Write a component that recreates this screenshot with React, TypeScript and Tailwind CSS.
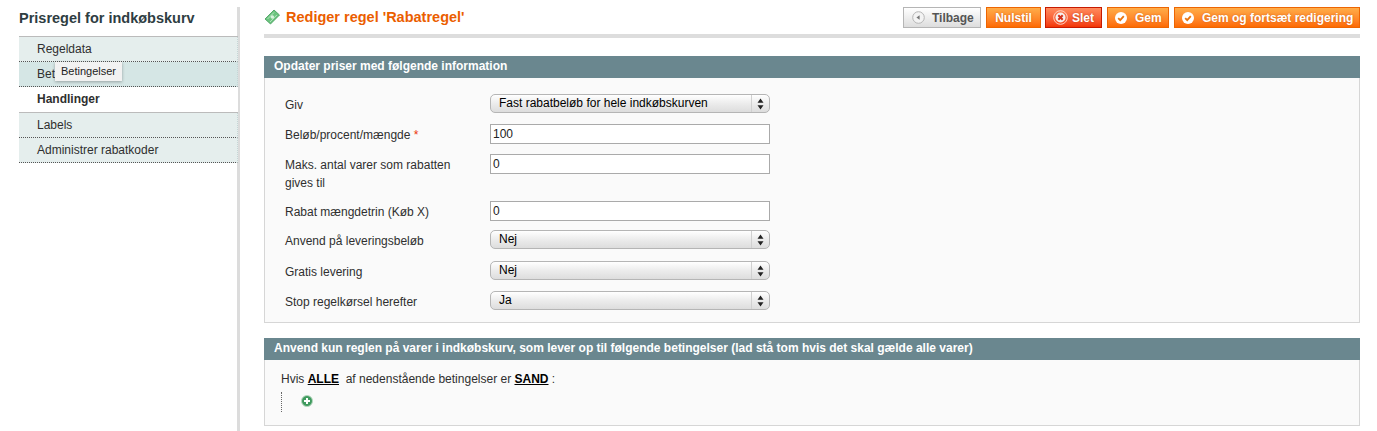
import React from "react";

function CheckIcon() {
  return (
    <svg width="14" height="14" viewBox="0 0 14 14" className="shrink-0">
      <circle cx="7" cy="7" r="6" fill="#fff" />
      <path d="M4.2 7.2 6.2 9.2 9.8 5.2" fill="none" stroke="#e8740f" strokeWidth="1.8" />
    </svg>
  );
}

function Orange({ children, className = "" }: { children: React.ReactNode; className?: string }) {
  return (
    <div
      className={`h-[21px] flex items-center border border-[#ed6502] bg-linear-to-b from-[#ffac47] to-[#fd6a00] text-white font-bold text-[12px] leading-none [text-shadow:0_0_2px_rgba(180,70,0,0.6)] ${className}`}
    >
      {children}
    </div>
  );
}

function Field({ label, req, children, tall }: { label: React.ReactNode; req?: boolean; children: React.ReactNode; tall?: boolean }) {
  return (
    <div className="flex items-start">
      <div className={`w-[205px] shrink-0 text-[12px] leading-[18px] text-[#2f2f2f] ${tall ? "pr-[20px]" : ""} pt-[2px]`}>
        {label}
        {req && <span className="text-[#eb340a]"> *</span>}
      </div>
      {children}
    </div>
  );
}

function Input({ value }: { value: string }) {
  return (
    <div className="w-[280px] h-[20px] border border-[#aaaaaa] bg-white pl-[2px] text-[12px] leading-[18px] text-[#222]">
      {value}
    </div>
  );
}

function Select({ value }: { value: string }) {
  return (
    <div className="w-[280px] h-[19px] flex rounded-[5px] border border-[#b5b5b5] bg-linear-to-b from-[#ffffff] via-[#ececec] to-[#dddddd] text-[12px] leading-[16px] text-black">
      <div className="flex-1 pl-[8px]">{value}</div>
      <div className="w-[18px] border-l border-[#d0d0d0] flex items-center justify-center">
        <svg width="7" height="12" viewBox="0 0 7 12">
          <path d="M3.5 0.5 6.5 4.7H.5Z M3.5 11.5 .5 7.3H6.5Z" fill="#222" />
        </svg>
      </div>
    </div>
  );
}

function NavItem({ children, hover, last }: { children: React.ReactNode; hover?: boolean; last?: boolean }) {
  return (
    <div
      className={`h-[25px] pl-[18px] pt-[5px] text-[12px] leading-[15px] text-[#2f2f2f] border-b border-dotted border-[#555] border-r border-r-[#c5d5d5] ${hover ? "bg-[#d5e6e5]" : "bg-[#e5eeed]"} ${last ? "" : ""}`}
    >
      {children}
    </div>
  );
}

export default function App() {
  return (
    <div className="w-[1377px] h-[431px] overflow-hidden bg-white flex font-['Liberation_Sans',Arial,sans-serif]">
      <div className="w-[240px] shrink-0 pt-[7px] flex flex-col pl-[19px]">
        <div className="flex-1 border-r-[3px] border-[#dcdcdc]">
          <div className="h-[29px] pt-[2px] text-[14.5px] leading-[18px] font-bold text-[#2e3d42]">Prisregel for indkøbskurv</div>
          <div className="relative border-t border-[#bbbbbb] w-[219px]">
            <NavItem>Regeldata</NavItem>
            <NavItem hover>Bet</NavItem>
            <div className="h-[26px] pl-[18px] pt-[5px] text-[12px] leading-[15px] font-bold text-[#2f2f2f] bg-white border-b border-[#bbbbbb]">Handlinger</div>
            <NavItem>Labels</NavItem>
            <NavItem>Administrer rabatkoder</NavItem>
            <div className="absolute left-[36px] top-[25px] h-[19px] px-[6px] bg-[#f2f2f2] shadow-[0_1px_3px_rgba(0,0,0,0.3)] text-[11px] leading-[18px] text-[#222]">Betingelser</div>
          </div>
        </div>
      </div>

      <div className="w-[1096px] ml-[24px] pt-[7px] flex flex-col">
        <div className="h-[31px] border-b-[4px] border-[#dddddd] flex justify-between items-start">
          <div className="flex items-center gap-[6px] pt-[1px]">
            <svg width="16" height="16" viewBox="0 0 16 16" className="shrink-0">
              <path d="M1 10 10 1 15.5 6 6.5 15Z" fill="#6cc47f" stroke="#3f9a58" strokeWidth="0.8" />
              <path d="M3.5 10 10 3.5M6 13 12.8 6" stroke="#c9ecd0" strokeWidth="0.8" />
              <circle cx="8.3" cy="8" r="1.8" fill="#d8f2dd" />
            </svg>
            <div className="text-[14.5px] leading-[18px] font-bold text-[#eb5e00]">Rediger regel 'Rabatregel'</div>
          </div>
          <div className="flex items-start">
            <div className="w-[78px] h-[21px] flex items-center border border-[#b5b5b5] bg-linear-to-b from-[#ffffff] to-[#dddddd] text-[#555] font-bold text-[12px] pl-[8px] gap-[7px]">
              <svg width="13" height="13" viewBox="0 0 13 13" className="shrink-0">
                <circle cx="6.5" cy="6.5" r="5.8" fill="#f3f3f3" stroke="#b5b5b5" />
                <path d="M7.6 4.2V8.8L4.4 6.5Z" fill="#777" />
              </svg>
              Tilbage
            </div>
            <Orange className="w-[55px] ml-[5px] justify-center">Nulstil</Orange>
            <div className="w-[57px] ml-[4px] h-[21px] flex items-center justify-center gap-[4px] border border-[#c71a00] bg-linear-to-b from-[#ff8a5c] to-[#f33400] text-white font-bold text-[12px] [text-shadow:0_0_2px_rgba(150,40,0,0.6)]">
              <svg width="15" height="15" viewBox="0 0 15 15" className="shrink-0">
                <circle cx="7.5" cy="7.5" r="6.8" fill="none" stroke="#ffd2c2" />
                <circle cx="7.5" cy="7.5" r="5" fill="#f6f0ee" />
                <path d="M5.3 5.3 9.7 9.7M9.7 5.3 5.3 9.7" stroke="#d4301c" strokeWidth="2" />
              </svg>
              Slet
            </div>
            <Orange className="w-[62px] ml-[5px] pl-[6px] gap-[7px]">
              <CheckIcon />
              Gem
            </Orange>
            <Orange className="w-[186px] ml-[5px] pl-[6px] gap-[7px]">
              <CheckIcon />
              Gem og fortsæt redigering
            </Orange>
          </div>
        </div>

        <div className="mt-[18px] h-[22px] bg-[#6a878f] pl-[10px] text-[12px] leading-[21px] font-bold text-white">Opdater priser med følgende information</div>
        <div className="h-[245px] bg-[#fafafa] border border-t-0 border-[#d6d6d6] pl-[20px] pt-[16px] flex flex-col">
          <Field label="Giv"><Select value="Fast rabatbeløb for hele indkøbskurven" /></Field>
          <div className="mt-[10px]"><Field label="Beløb/procent/mængde" req><Input value="100" /></Field></div>
          <div className="mt-[10px] h-[37px]"><Field label="Maks. antal varer som rabatten gives til" tall><Input value="0" /></Field></div>
          <div className="mt-[10px]"><Field label="Rabat mængdetrin (Køb X)"><Input value="0" /></Field></div>
          <div className="mt-[9px]"><Field label="Anvend på leveringsbeløb"><Select value="Nej" /></Field></div>
          <div className="mt-[11px]"><Field label="Gratis levering"><Select value="Nej" /></Field></div>
          <div className="mt-[10px]"><Field label="Stop regelkørsel herefter"><Select value="Ja" /></Field></div>
        </div>

        <div className="mt-[15px] h-[22px] bg-[#6a878f] pl-[10px] text-[12px] leading-[21px] font-bold text-white">Anvend kun reglen på varer i indkøbskurv, som lever op til følgende betingelser (lad stå tom hvis det skal gælde alle varer)</div>
        <div className="h-[66px] bg-[#fafafa] border border-t-0 border-[#d6d6d6] pl-[16px] pt-[12px]">
          <div className="text-[12px] leading-[15px] text-[#2f2f2f] whitespace-pre">
            Hvis <span className="font-bold text-black underline">ALLE</span>  af nedenstående betingelser er <span className="font-bold text-black underline">SAND</span> :
          </div>
          <div className="mt-[5px] h-[20px] border-l border-dotted border-[#666] pl-[19px] pt-[3px]">
            <svg width="12" height="12" viewBox="0 0 12 12">
              <circle cx="6" cy="6" r="5.5" fill="#3f9a5e" stroke="#b8d8c0" />
              <path d="M6 3V9M3 6H9" stroke="#fff" strokeWidth="2" />
            </svg>
          </div>
        </div>
      </div>
    </div>
  );
}
